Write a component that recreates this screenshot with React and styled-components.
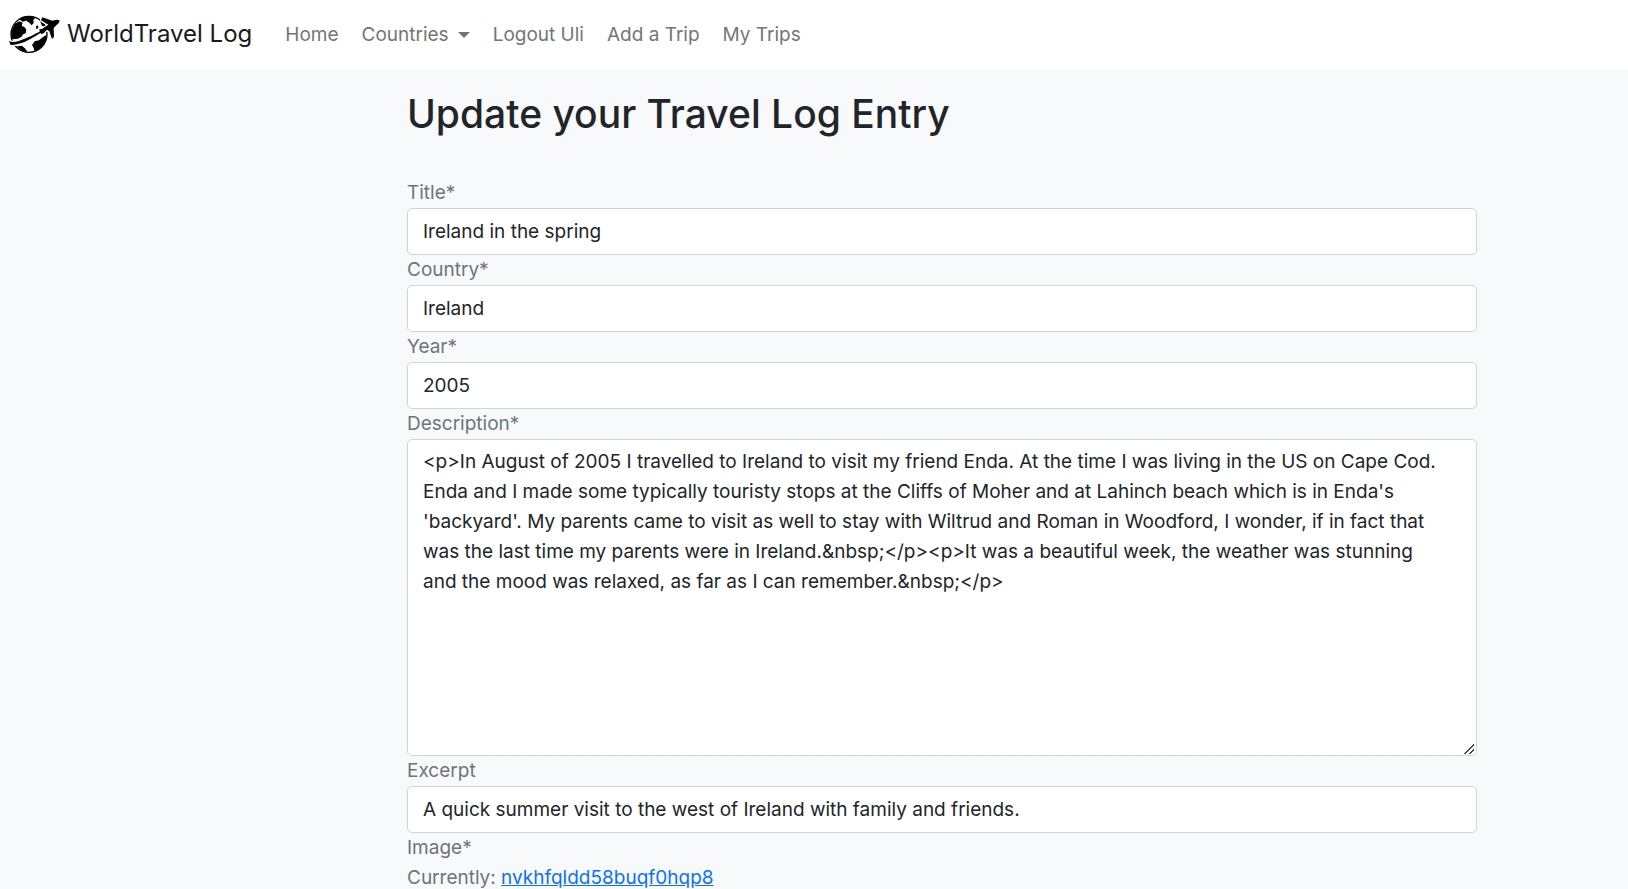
import React from 'react';
import styled, { createGlobalStyle } from 'styled-components';

const GlobalStyle = createGlobalStyle`
  *, *::before, *::after { box-sizing: border-box; }
  body {
    margin: 0;
    background: #f8f9fb;
    color: #212529;
    font-family: Inter, "Liberation Sans", sans-serif;
    font-size: 19px;
    line-height: 30px;
  }
`;

const Navbar = styled.nav`
  display: flex;
  align-items: center;
  height: 70px;
  padding: 0 8px;
  background: #fff;
`;

const Brand = styled.a`
  display: flex;
  align-items: center;
  gap: 6px;
  margin-right: 33px;
  padding-bottom: 2px;
  color: #1a1a1a;
  font-size: 24px;
  line-height: 36px;
  text-decoration: none;
  white-space: nowrap;
`;

const BrandMark = styled.svg`
  width: 53px;
  height: 40px;
  flex: none;
`;

const NavList = styled.ul`
  display: flex;
  gap: 23px;
  margin: 0;
  padding: 0;
  list-style: none;
  white-space: nowrap;
`;

const NavLink = styled.a`
  color: #757575;
  text-decoration: none;
`;

const NavToggle = styled.button`
  display: flex;
  align-items: center;
  gap: 9px;
  padding: 0;
  border: 0;
  background: none;
  color: #757575;
  font: inherit;
  cursor: pointer;

  &::after {
    content: "";
    border: 6px solid transparent;
    border-top-color: currentColor;
    border-bottom: 0;
  }
`;

const Main = styled.main`
  padding: 20px 9% 40px 25%;
`;

const Content = styled.div`
  max-width: 1070px;
`;

const Heading = styled.h1`
  margin: 0 0 40px;
  font-size: 39px;
  font-weight: 500;
  line-height: 48px;
`;

const Form = styled.form`
  display: flex;
  flex-direction: column;
  color: #6c757d;
`;

const Label = styled.label`
  display: block;
`;

const Input = styled.input`
  display: block;
  width: 100%;
  height: 47px;
  padding: 7px 15px 8px;
  border: 1px solid #ced4da;
  border-radius: 5px;
  background: #fff;
  color: #212529;
  font: inherit;
  outline: 0;
`;

const TextArea = styled.textarea`
  display: block;
  width: 100%;
  height: 317px;
  padding: 7px 31px 7px 15px;
  border: 1px solid #ced4da;
  border-radius: 5px;
  background: #fff;
  color: #212529;
  font: inherit;
  outline: 0;
  resize: vertical;

  &::-webkit-resizer {
    background: linear-gradient(
        135deg,
        transparent 0 46%,
        #444 46% 56%,
        transparent 56% 72%,
        #444 72% 82%,
        transparent 82%
      )
      right 2px bottom 1px / 10px 10px no-repeat;
  }
`;

const FileLink = styled.a`
  color: #0d6efd;
`;

const description =
  "<p>In August of 2005 I travelled to Ireland to visit my friend Enda. At the time I was living in the US on Cape Cod. Enda and I made some typically touristy stops at the Cliffs of Moher and at Lahinch beach which is in Enda's 'backyard'. My parents came to visit as well to stay with Wiltrud and Roman in Woodford, I wonder, if in fact that was the last time my parents were in Ireland.&nbsp;</p><p>It was a beautiful week, the weather was stunning and the mood was relaxed, as far as I can remember.&nbsp;</p>";

function Logo() {
  return (
    <BrandMark viewBox="24 44 159 120" aria-hidden="true">
      <circle cx="87" cy="105" r="54" fill="#fff" stroke="#000" strokeWidth="4" />
      <path d="M58 60 L72 52 L92 50 L106 55 L100 62 L101 71 L95 78 L88 70 L79 64 L68 67 Z" />
      <path d="M34 95 L44 74 L58 66 L68 70 L65 79 L74 84 L79 91 L77 102 L69 105 L65 112 L54 118 L38 120 L34 112 Z" />
      <path d="M96 137 L104 126 L117 123 L128 114 L140 106 L138 124 L127 141 L112 152 L103 155 L101 146 Z" />
      <path d="M50 141 L66 139 L76 148 L82 157 L65 154 Z" />
      <path d="M108 81 L114 78 L115 86 L109 90 Z" />
      <path d="M119 62 L134 72 L139 84 L126 80 Z" />
      <path
        d="M27 126 L38 128 C62 126 88 112 119 97 L120 91 L128 88 L138 82 L145 76 L124 64 L126 54 L157 63 L166 62 Q176 60 179 64 Q178 72 169 78 L161 86 L163 112 L155 119 L147 96 L141 92 L128 101 L116 105 C88 122 61 137 32 137 Z"
        stroke="#fff"
        strokeWidth="8"
        strokeLinejoin="round"
      />
      <path d="M27 126 L38 128 C62 126 88 112 119 97 L118 90 L126 89 L138 81 L145 76 L123 63 L127 54 L157 64 L166 62 Q176 60 179 64 Q178 72 169 78 L161 86 L162 112 L156 119 L148 96 L141 91 L131 102 L124 104 L121 101 C89 122 61 137 32 137 Z" />
    </BrandMark>
  );
}

function Field({ id, label, value }) {
  return (
    <div>
      <Label htmlFor={id}>{label}</Label>
      <Input id={id} name={id} type="text" defaultValue={value} />
    </div>
  );
}

export default function App() {
  return (
    <>
      <GlobalStyle />
      <Navbar>
        <Brand href="#">
          <Logo />
          WorldTravel Log
        </Brand>
        <NavList>
          <li><NavLink href="#">Home</NavLink></li>
          <li><NavToggle type="button" aria-haspopup="true">Countries</NavToggle></li>
          <li><NavLink href="#">Logout Uli</NavLink></li>
          <li><NavLink href="#">Add a Trip</NavLink></li>
          <li><NavLink href="#">My Trips</NavLink></li>
        </NavList>
      </Navbar>
      <Main>
        <Content>
          <Heading>Update your Travel Log Entry</Heading>
          <Form>
            <Field id="title" label="Title*" value="Ireland in the spring" />
            <Field id="country" label="Country*" value="Ireland" />
            <Field id="year" label="Year*" value="2005" />
            <div>
              <Label htmlFor="description">Description*</Label>
              <TextArea id="description" name="description" defaultValue={description} />
            </div>
            <Field id="excerpt" label="Excerpt" value="A quick summer visit to the west of Ireland with family and friends." />
            <div>Image*</div>
            <div>
              Currently: <FileLink href="#">nvkhfqldd58buqf0hqp8</FileLink>
            </div>
          </Form>
        </Content>
      </Main>
    </>
  );
}
